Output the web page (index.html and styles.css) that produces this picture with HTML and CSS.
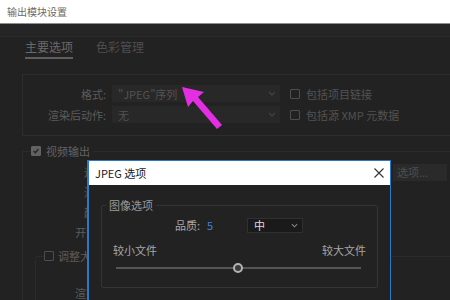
FILE: index.html
```html
<!DOCTYPE html>
<html lang="zh-CN">
<head>
<meta charset="utf-8">
<title>输出模块设置</title>
<link rel="stylesheet" href="styles.css">
</head>
<body>
<div class="app">
  <div class="titlebar">输出模块设置</div>
  <div class="toolbar"></div>
  <div class="main">
    <div class="tabs">
      <span class="tab active">主要选项</span>
      <span class="tab">色彩管理</span>
    </div>
    <div class="format-box">
      <div class="frow">
        <span class="flabel">格式:</span>
        <div class="select"><span>"JPEG"序列</span><svg class="chev" viewBox="0 0 8 5" width="8" height="5"><path d="M1 1 L4 4 L7 1" fill="none" stroke="#444" stroke-width="1.2"/></svg></div>
        <div class="check"><span class="box"></span><span>包括项目链接</span></div>
      </div>
      <div class="frow">
        <span class="flabel">渲染后动作:</span>
        <div class="select"><span>无</span><svg class="chev" viewBox="0 0 8 5" width="8" height="5"><path d="M1 1 L4 4 L7 1" fill="none" stroke="#444" stroke-width="1.2"/></svg></div>
        <div class="check"><span class="box"></span><span>包括源 XMP 元数据</span></div>
      </div>
    </div>
    <fieldset class="video">
      <legend class="vlegend"><span class="box checked"><svg viewBox="0 0 10 10" width="8" height="8"><path d="M2 5 L4.2 7.2 L8 2.8" fill="none" stroke="#232323" stroke-width="1.6"/></svg></span><span>视频输出</span></legend>
      <div class="vrow"><span class="vlabel">通道:</span><span class="optbtn">选项...</span></div>
      <div class="vrow"><span class="vlabel">深度:</span></div>
      <div class="vrow"><span class="vlabel">颜色:</span></div>
      <div class="vrow"><span class="vlabel">开始 #:</span></div>
      <fieldset class="resize">
        <legend class="rlegend"><span class="box"></span><span>调整大小</span></legend>
        <div class="rrow"><span class="rlabel">渲染在:</span></div>
      </fieldset>
    </fieldset>
  </div>
</div>

<div class="dialog">
  <div class="dtitle">
    <span>JPEG 选项</span>
    <svg class="close" viewBox="0 0 10 10" width="10" height="10"><path d="M0.5 0.5 L9.5 9.5 M9.5 0.5 L0.5 9.5" stroke="#333" stroke-width="1.1"/></svg>
  </div>
  <fieldset class="imgopts">
    <legend class="dlegend">图像选项</legend>
    <div class="qrow">
      <span class="qlabel">品质:</span>
      <span class="qval">5</span>
      <div class="qselect"><span>中</span><svg viewBox="0 0 8 5" width="7" height="5"><path d="M1 1 L4 4 L7 1" fill="none" stroke="#888" stroke-width="1.2"/></svg></div>
    </div>
    <div class="sizerow"><span>较小文件</span><span>较大文件</span></div>
    <div class="slider"><div class="track"></div><div class="thumb"></div></div>
  </fieldset>
</div>

<svg class="arrow" viewBox="0 0 450 300" width="450" height="300">
  <polygon points="182,87 204,92 198,97 222,125 217,129 193,101 188,107" fill="#e42ee4"/>
</svg>
</body>
</html>
```

FILE: styles.css
```css
* { box-sizing: border-box; }
html, body {
  margin: 0;
  padding: 0;
  width: 450px;
  height: 300px;
  overflow: hidden;
  background: #222222;
  font-family: "Noto Sans CJK SC", "Noto Sans", sans-serif;
}
body { position: relative; }

.app { width: 450px; height: 300px; overflow: hidden; }

.titlebar {
  height: 24px;
  background: #ffffff;
  border-bottom: 1px solid #8e8e8e;
  color: #6a6a6a;
  font-size: 10px;
  line-height: 23px;
  padding-left: 7px;
}

.toolbar {
  height: 13px;
  background: #252525;
  border-bottom: 1px solid #2b2b2b;
}

.main {
  padding-left: 22px;
}

.tabs {
  display: flex;
  gap: 23px;
  padding-left: 3px;
  height: 22px;
}
.tab {
  font-size: 12px;
  line-height: 20px;
  color: #4e4e4e;
  height: 22px;
}
.tab.active {
  color: #6a6a6a;
  border-bottom: 2px solid #5e5e5e;
}

.format-box {
  margin-top: 15px;
  border: 1px solid #2d2d2d;
  border-right: none;
  padding: 10px 0 12px 0;
  display: flex;
  flex-direction: column;
  gap: 4px;
}
.frow {
  display: flex;
  align-items: center;
  height: 17px;
}
.flabel {
  width: 83px;
  text-align: right;
  font-size: 11px;
  color: #5c5c5c;
}
.select {
  margin-left: 6px;
  width: 168px;
  height: 17px;
  background: #282828;
  display: flex;
  align-items: center;
  justify-content: space-between;
  padding: 0 4px 0 6px;
  font-size: 11px;
  color: #535353;
}
.chev { display: block; }
.check {
  display: flex;
  align-items: center;
  margin-left: 10px;
  gap: 6px;
  font-size: 11px;
  color: #525252;
}
.box {
  width: 10px;
  height: 10px;
  border: 1px solid #4e4e4e;
  border-radius: 1px;
  display: inline-flex;
  align-items: center;
  justify-content: center;
  flex: none;
}
.box.checked {
  background: #626262;
  border-color: #626262;
}
.box svg { display: block; }

fieldset { margin: 0; min-inline-size: 0; }

.video {
  margin-top: 8px;
  border: 1px solid #2b2b2b;
  border-right: none;
  padding: 0;
}
.vlegend {
  display: flex;
  align-items: center;
  gap: 5px;
  height: 14px;
  padding: 0 3px 0 0;
  margin-left: 8px;
  font-size: 11px;
  color: #636363;
}
.vrow {
  display: flex;
  align-items: center;
  height: 20px;
}
.vrow:first-of-type { margin-top: 4px; }
.vlabel {
  width: 86px;
  text-align: right;
  font-size: 11px;
  color: #5c5c5c;
  flex: none;
}
.optbtn {
  margin-left: auto;
  margin-right: 3px;
  width: 54px;
  height: 17px;
  background: #2a2a2a;
  font-size: 11px;
  color: #4e4e4e;
  line-height: 17px;
  padding-left: 4px;
}

.resize {
  margin: 7px 0 0 12px;
  border: 1px solid #2b2b2b;
  border-right: none;
  border-radius: 3px 0 0 0;
  padding: 0 0 20px 8px;
}
.rlegend {
  display: flex;
  align-items: center;
  gap: 4px;
  height: 14px;
  padding: 0 2px 0 0;
  font-size: 11px;
  color: #5c5c5c;
}
.rrow {
  display: flex;
  align-items: center;
  height: 20px;
  margin-top: 20px;
}
.rlabel {
  width: 67px;
  text-align: right;
  font-size: 11px;
  color: #5c5c5c;
}

.arrow {
  position: absolute;
  left: 0;
  top: 0;
  pointer-events: none;
}

.dialog {
  position: absolute;
  left: 87px;
  top: 160px;
  width: 304px;
  height: 145px;
  background: #222222;
  border: 1px solid #2a78c8;
  border-left-width: 2px;
}
.dtitle {
  height: 24px;
  background: #ffffff;
  display: flex;
  align-items: center;
  justify-content: space-between;
  padding: 0 6px 0 6px;
  font-size: 11px;
  color: #1a1a1a;
}
.close { display: block; }

.imgopts {
  margin: 13px 12px 0 12px;
  border: 1px solid #353535;
  border-radius: 2px;
  padding: 0 4px 13px 4px;
}
.dlegend {
  font-size: 11px;
  line-height: 14px;
  height: 14px;
  padding: 0 3px;
  color: #9a9a9a;
}
.qrow {
  display: flex;
  align-items: center;
  height: 16px;
  margin-top: 5px;
  padding-left: 69px;
}
.qlabel {
  width: 32px;
  font-size: 11px;
  color: #a8a8a8;
}
.qval {
  width: 40px;
  font-size: 11px;
  color: #3f82d8;
}
.qselect {
  width: 56px;
  height: 15px;
  background: #1a1a1a;
  border: 1px solid #303030;
  display: flex;
  align-items: center;
  justify-content: space-between;
  padding: 0 4px 0 6px;
  font-size: 11px;
  color: #dddddd;
}
.qselect svg { display: block; }
.sizerow {
  display: flex;
  justify-content: space-between;
  margin-top: 10px;
  padding: 0 7px;
  font-size: 11px;
  line-height: 14px;
  color: #a6a6a6;
}
.slider {
  position: relative;
  height: 12px;
  margin: 5px 12px 0 10px;
  display: flex;
  align-items: center;
}
.track {
  width: 100%;
  height: 2px;
  background: #555555;
}
.thumb {
  position: absolute;
  left: 117px;
  top: 1px;
  width: 10px;
  height: 10px;
  border-radius: 50%;
  border: 2px solid #b4b4b4;
  background: #3a3a3a;
}
```
